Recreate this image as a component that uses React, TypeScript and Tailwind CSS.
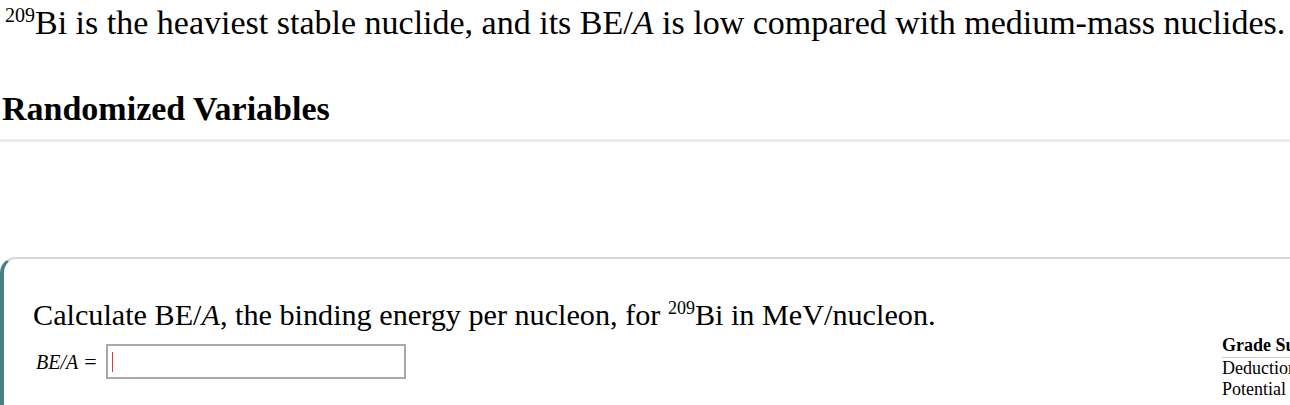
import React from 'react';

const serif = "font-['Liberation_Serif','Times_New_Roman',serif]";

const App: React.FC = () => {
    return (
        <div className={`w-[1290px] h-[405px] overflow-hidden bg-white text-black ${serif}`}>
            {/* Intro sentence */}
            <p className="text-[34px] leading-[40px] pt-[3px] pl-[5px] whitespace-nowrap">
                <sup className="text-[20px] top-[-12px]">209</sup>Bi is the heaviest stable nuclide, and its BE/<i>A</i> is low compared with medium-mass nuclides.
            </p>

            {/* Section heading */}
            <h2 className="text-[34px] leading-[40px] font-bold mt-[46px] pl-[2px]">Randomized Variables</h2>
            <div className="mt-[10px] h-[3px] bg-[#ebebeb]" />

            {/* Question card */}
            <div className="mt-[115px] border-t-2 border-l-4 border-t-[#d6d6d6] border-l-[#4d7e86] rounded-tl-[16px] h-[200px]">
                <div className="flex">
                    <div className="flex-1 pl-[29px] pt-[38px]">
                        <p className="text-[30.2px] leading-[36px] whitespace-nowrap">
                            Calculate BE/<i>A</i>, the binding energy per nucleon, for <sup className="text-[18px] top-[-11px]">209</sup>Bi in MeV/nucleon.
                        </p>
                        <div className="flex items-center mt-[11px] pl-[3px]">
                            <span className="text-[20px] italic mr-[9px] flex items-center gap-[6px]">
                                BE/A
                                <span className="not-italic text-[22px]">=</span>
                            </span>
                            <div className="w-[300px] h-[35px] border-2 border-[#a9a9a9] flex items-center pl-[4px]">
                                <span className="w-[1px] h-[20px] bg-[#d43f3a]" />
                            </div>
                        </div>
                    </div>
                    <div className="w-[68px] pt-[76px] text-[18px] leading-[21px] whitespace-nowrap overflow-hidden">
                        <div className="font-bold border-b border-[#cccccc] leading-[21px] pb-[1px]">Grade Summary</div>
                        <div>Deduction</div>
                        <div>Potential</div>
                    </div>
                </div>
            </div>
        </div>
    );
};

export default App;
